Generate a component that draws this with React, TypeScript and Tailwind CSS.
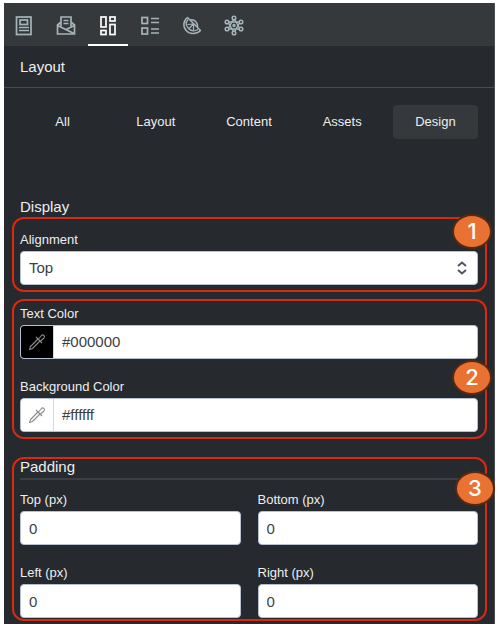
import React, { useState } from 'react';
import clsx from 'clsx';

const icons: { id: string; label: string; art: React.ReactNode }[] = [
  {
    id: 'template',
    label: 'Template',
    art: (
      <>
        <rect x="2.500" y="2" width="14.500" height="17.500" />
        <rect x="6" y="5" width="7.500" height="4.500" />
        <path d="M5 12.5h10M5 15.5h10" strokeWidth="1.500" />
      </>
    ),
  },
  {
    id: 'message',
    label: 'Message',
    art: (
      <>
        <path d="M5 11.500V2h10v9.500" />
        <path d="M7.500 5.500h5M7.500 8.500h5" strokeWidth="1.400" />
        <path d="M4.500 7.500L1.500 10v9h17v-9l-3-2.500" />
        <path d="M1.500 10.500L18 18.500M18.500 10.500L10 14.500" />
      </>
    ),
  },
  {
    id: 'layout',
    label: 'Layout',
    art: (
      <>
        <rect x="3" y="2" width="5" height="10" />
        <rect x="3" y="15.500" width="5" height="4" />
        <rect x="12" y="2" width="5" height="4" />
        <rect x="12" y="9.500" width="5" height="10" />
      </>
    ),
  },
  {
    id: 'list',
    label: 'List',
    art: (
      <>
        <rect x="2" y="2.500" width="5.500" height="6" />
        <rect x="2" y="13" width="5.500" height="6" />
        <path d="M11 3.500h8M11 7.500h8M11 14h8M11 18h8" strokeWidth="1.5" />
      </>
    ),
  },
  {
    id: 'citrus',
    label: 'Citrus',
    art: (
      <g strokeWidth="1.500" strokeLinejoin="round">
        {/* rind */}
        <path d="M5.500 2.500C1 5.500.800 12 4.300 15.800S14.500 19.500 18.500 15.500z" />
        {/* flesh */}
        <path d="M6 4.500C3.500 7.500 4 11 6.500 13.500s6 3 9.500 1" strokeWidth="1.300" />
        <path d="M8.500 4.800C12.500 4 16 7.500 15.500 12" />
        <path d="M11.500 9L5.500 9.500M11.500 9l-4.500 4.500M11.500 9v6" strokeWidth="1.200" />
      </g>
    ),
  },
  {
    id: 'network',
    label: 'Network',
    art: (
      <g strokeWidth="1.500">
        <path d="M4 7h12L10 17.500zM4 14h12L10 3.500z" />
        <circle cx="10" cy="3" r="1.800" fill="#35393c" />
        <circle cx="10" cy="18" r="1.800" fill="#35393c" />
        <circle cx="3" cy="7" r="1.800" fill="#35393c" />
        <circle cx="17" cy="7" r="1.800" fill="#35393c" />
        <circle cx="3" cy="14" r="1.800" fill="#35393c" />
        <circle cx="17" cy="14" r="1.800" fill="#35393c" />
        <circle cx="10" cy="10.500" r="1" />
      </g>
    ),
  },
];

const filters = ['All', 'Layout', 'Content', 'Assets', 'Design'];

const labelClass = 'block text-[13px] leading-[22px]';
const fieldClass =
  'block w-full h-[34px] rounded border border-[#b7c0d0] bg-white px-2 text-[15px] text-[#3b3e45] outline-none';
const groupClass = 'relative ml-2 mr-[7px] rounded-xl border-2 border-[#d92a10] pl-1.5 pr-[7px]';

const Badge: React.FC<{ n: number; className: string }> = ({ n, className }) => (
  <span
    className={clsx(
      "absolute flex h-[35px] w-10 items-center justify-center rounded-[50%] border-2 border-[#57290f] bg-[#e97132] font-['Inter',sans-serif] text-[22px] font-medium text-white",
      className
    )}
  >
    {n}
  </span>
);

const Pipette: React.FC = () => (
  <svg width="18" height="18" viewBox="0 0 18 18" fill="none" stroke="currentColor" strokeWidth="1.100" strokeLinejoin="round">
    <path d="M10 6L2.500 13.500 1.500 16.500 4.500 15.500 12 8" />
    <path d="M8 4l6 6M10.500 6l3-3.500c1.500-1.500 4 .5 2.500 2.500l-3.500 3" />
  </svg>
);

const NumberField: React.FC<{ id: string; label: string }> = ({ id, label }) => {
  const [value, setValue] = useState('0');
  return (
    <div>
      <label htmlFor={id} className={labelClass}>{label}</label>
      <input id={id} type="text" inputMode="numeric" className={fieldClass} value={value} onChange={e => setValue(e.target.value)} />
    </div>
  );
};

const ColorField: React.FC<{ id: string; label: string; initial: string }> = ({ id, label, initial }) => {
  const [value, setValue] = useState(initial);
  return (
    <div>
      <label htmlFor={id} className={labelClass}>{label}</label>
      <div className="flex h-[34px] overflow-hidden rounded border border-[#b7c0d0] bg-white">
        <button
          type="button"
          aria-label={`Pick ${label}`}
          className="flex w-[33px] shrink-0 items-center justify-center border-r border-[#d3d8e2] text-[#8b8b8b]"
          style={{ backgroundColor: value }}
        >
          <Pipette />
        </button>
        <input
          id={id}
          type="text"
          className="min-w-0 flex-1 px-2 text-[15px] text-[#3b3e45] outline-none"
          value={value}
          onChange={e => setValue(e.target.value)}
        />
      </div>
    </div>
  );
};

const App: React.FC = () => {
  const [activeIcon, setActiveIcon] = useState('layout');
  const [activeFilter, setActiveFilter] = useState('Design');
  const [alignment, setAlignment] = useState('Top');

  return (
    <div className="bg-white pt-[3px] pr-[5px] pb-1 pl-1 font-['Liberation_Sans',Arial,sans-serif]">
      <div className="border-r border-[#4a4e52] bg-[#26292d] pb-[3px] text-[#eceef0]">
        <nav className="flex gap-0.5 bg-[#35393c]">
          {icons.map(icon => (
            <button
              key={icon.id}
              type="button"
              aria-label={icon.label}
              onClick={() => setActiveIcon(icon.id)}
              className={clsx(
                'flex h-[43px] w-10 items-center justify-center border-b-2 pt-1',
                activeIcon === icon.id ? 'border-white text-white' : 'border-transparent text-[#a5b4b9]'
              )}
            >
              <svg width="20" height="21" viewBox="0 0 20 21" fill="none" stroke="currentColor" strokeWidth="1.700">
                {icon.art}
              </svg>
            </button>
          ))}
        </nav>

        <h1 className="flex h-[42px] items-center border-b border-[#484c50] px-4 pt-0.5 text-[15px]">Layout</h1>

        <div className="grid grid-cols-5 gap-2 px-4 pt-[17px]">
          {filters.map(name => (
            <button
              key={name}
              type="button"
              onClick={() => setActiveFilter(name)}
              className={clsx('h-[34px] rounded text-[13px]', activeFilter === name && 'bg-[#35393c]')}
            >
              {name}
            </button>
          ))}
        </div>

        <h2 className="mt-[58px] px-4 text-[15px] leading-5">Display</h2>

        {/* Alignment */}
        <section className={clsx(groupClass, 'pt-2.5 pb-[5px]')}>
          <label htmlFor="alignment" className={labelClass}>Alignment</label>
          <div className="relative">
            <select
              id="alignment"
              className={clsx(fieldClass, 'appearance-none')}
              value={alignment}
              onChange={e => setAlignment(e.target.value)}
            >
              <option>Top</option>
              <option>Middle</option>
              <option>Bottom</option>
            </select>
            <svg
              className="pointer-events-none absolute top-2.5 right-2.5 text-[#50545e]"
              width="12"
              height="14"
              viewBox="0 0 12 14"
              fill="none"
              stroke="currentColor"
              strokeWidth="2"
            >
              <path d="M2 5l4-3.500L10 5M2 9l4 3.500L10 9" />
            </svg>
          </div>
          <Badge n={1} className="-top-[5px] -right-[7px]" />
        </section>

        {/* Colors */}
        <section className={clsx(groupClass, 'mt-[7px] flex flex-col gap-[17px] pt-0.5 pb-[5px]')}>
          <ColorField id="text-color" label="Text Color" initial="#000000" />
          <ColorField id="background-color" label="Background Color" initial="#ffffff" />
          <Badge n={2} className="top-[59px] -right-[7px]" />
        </section>

        {/* Padding */}
        <section className={clsx(groupClass, 'mt-[18px] pb-px')}>
          <h2 className="border-b-2 border-[#3b3e42] pb-[3px] text-[15px] leading-4">Padding</h2>
          <div className="mt-[9px] grid grid-cols-2 gap-[17px]">
            <NumberField id="padding-top" label="Top (px)" />
            <NumberField id="padding-bottom" label="Bottom (px)" />
            <NumberField id="padding-left" label="Left (px)" />
            <NumberField id="padding-right" label="Right (px)" />
          </div>
          <Badge n={3} className="top-3 -right-2.5" />
        </section>
      </div>
    </div>
  );
};

export default App;
